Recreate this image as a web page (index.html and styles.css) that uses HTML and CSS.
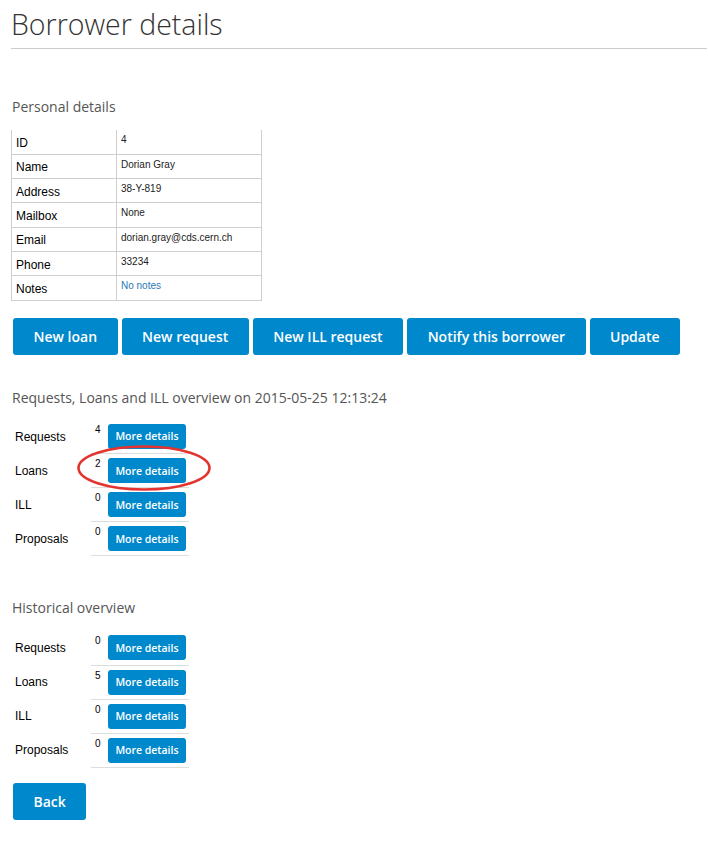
FILE: index.html
```html
<!DOCTYPE html>
<html>
<head>
<meta charset="utf-8">
<title>Borrower details</title>
<link rel="stylesheet" href="styles.css">
</head>
<body>
<div class="page">
  <h1 class="title">Borrower details</h1>

  <h3 class="section-title personal-title">Personal details</h3>
  <table class="details">
    <tr><td class="k">ID</td><td class="v">4</td></tr>
    <tr><td class="k">Name</td><td class="v">Dorian Gray</td></tr>
    <tr><td class="k">Address</td><td class="v">38-Y-819</td></tr>
    <tr><td class="k">Mailbox</td><td class="v">None</td></tr>
    <tr><td class="k">Email</td><td class="v">dorian.gray@cds.cern.ch</td></tr>
    <tr><td class="k">Phone</td><td class="v">33234</td></tr>
    <tr><td class="k">Notes</td><td class="v"><a class="link" href="#">No notes</a></td></tr>
  </table>

  <div class="actions">
    <button class="btn">New loan</button>
    <button class="btn">New request</button>
    <button class="btn">New ILL request</button>
    <button class="btn">Notify this borrower</button>
    <button class="btn">Update</button>
  </div>

  <h3 class="section-title overview-title">Requests, Loans and ILL overview on 2015-05-25 12:13:24</h3>
  <div class="overview-wrap">
    <table class="overview">
      <tr><td class="ok">Requests</td><td class="ov"><div class="cell"><span class="num">4</span><button class="btn-sm">More details</button></div></td></tr>
      <tr><td class="ok">Loans</td><td class="ov"><div class="cell"><span class="num">2</span><button class="btn-sm">More details</button></div></td></tr>
      <tr><td class="ok">ILL</td><td class="ov"><div class="cell"><span class="num">0</span><button class="btn-sm">More details</button></div></td></tr>
      <tr><td class="ok">Proposals</td><td class="ov"><div class="cell"><span class="num">0</span><button class="btn-sm">More details</button></div></td></tr>
    </table>
    <svg class="mark" width="150" height="56" viewBox="0 0 150 56">
      <ellipse cx="75" cy="28" rx="65.5" ry="21.5" fill="none" stroke="#e3342f" stroke-width="2.6"/>
    </svg>
  </div>

  <h3 class="section-title history-title">Historical overview</h3>
  <table class="overview history">
    <tr><td class="ok">Requests</td><td class="ov"><div class="cell"><span class="num">0</span><button class="btn-sm">More details</button></div></td></tr>
    <tr><td class="ok">Loans</td><td class="ov"><div class="cell"><span class="num">5</span><button class="btn-sm">More details</button></div></td></tr>
    <tr><td class="ok">ILL</td><td class="ov"><div class="cell"><span class="num">0</span><button class="btn-sm">More details</button></div></td></tr>
    <tr><td class="ok">Proposals</td><td class="ov"><div class="cell"><span class="num">0</span><button class="btn-sm">More details</button></div></td></tr>
  </table>

  <div class="back-row">
    <button class="btn">Back</button>
  </div>
</div>
</body>
</html>
```

FILE: styles.css
```css
html, body {
  margin: 0;
  padding: 0;
  background: #ffffff;
}

.page {
  padding: 0 1px 0 11px;
  font-family: "Open Sans", "DejaVu Sans", sans-serif;
  color: #333;
}

.title {
  margin: 6px 0 0 0;
  padding: 0 0 6px 0;
  font-size: 28.5px;
  line-height: 36px;
  font-weight: 300;
  color: #333;
  border-bottom: 1px solid #cccccc;
}

.section-title {
  margin: 0;
  font-size: 14px;
  line-height: 20px;
  font-weight: 400;
  color: #555;
  padding-left: 1px;
}

.personal-title { margin-top: 48px; }
.overview-title { margin-top: 33px; }
.history-title { margin-top: 42px; }

.details {
  margin-top: 13px;
  border-collapse: collapse;
  font-family: "Liberation Sans", Arial, sans-serif;
  width: 251px;
}

.details td {
  border: 1px solid #cfcfcf;
  height: 24.3px;
  padding: 0 4px;
  box-sizing: border-box;
}

.details tr:first-child td { border-top: none; }

.details .k {
  width: 105px;
  font-size: 12px;
  color: #000;
  vertical-align: middle;
  padding-top: 2px;
}

.details .v {
  font-size: 10px;
  color: #222;
  vertical-align: top;
  padding-top: 4px;
}

.link {
  color: #2a7ab8;
  text-decoration: none;
}

.actions {
  margin-top: 17px;
  display: flex;
  gap: 4px;
  padding-left: 2px;
}

.btn {
  flex: none;
  white-space: nowrap;
  background: #0088cc;
  color: #fff;
  border: none;
  border-radius: 3px;
  height: 37px;
  padding: 0 20.5px;
  font-family: "Open Sans", "DejaVu Sans", sans-serif;
  font-size: 14px;
  font-weight: 600;
  cursor: pointer;
}

.overview-wrap {
  position: relative;
  padding-top: 12px;
}

.overview {
  border-collapse: collapse;
  font-family: "Liberation Sans", Arial, sans-serif;
}

.overview.history { margin-top: 13px; }

.overview td {
  padding: 0;
  height: 34px;
  box-sizing: border-box;
}

.overview .ok {
  width: 80px;
  padding-left: 4px;
  font-size: 12px;
  color: #000;
  vertical-align: middle;
  box-sizing: border-box;
}

.overview .ov {
  width: 98px;
  border-bottom: 1px solid #dddddd;
  vertical-align: top;
}

.cell {
  display: flex;
  align-items: flex-start;
  padding: 4px 0 0 4px;
}

.num {
  font-size: 10px;
  line-height: 12px;
  color: #000;
  width: 13px;
}

.btn-sm {
  flex: none;
  white-space: nowrap;
  background: #0088cc;
  color: #fff;
  border: none;
  border-radius: 3px;
  width: 78px;
  height: 25px;
  padding: 0;
  font-family: "Open Sans", "DejaVu Sans", sans-serif;
  font-size: 10.5px;
  font-weight: 600;
}

.mark {
  position: absolute;
  left: 58px;
  top: 32.5px;
}

.back-row {
  margin-top: 15px;
  padding-left: 2px;
}
```
